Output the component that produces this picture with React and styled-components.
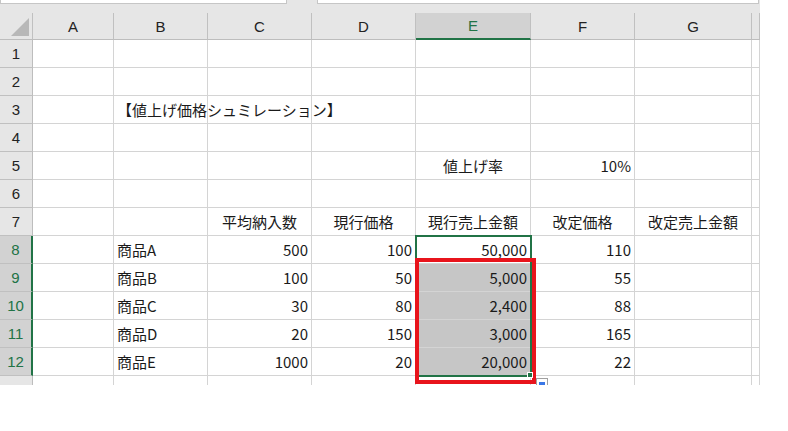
import React from 'react';
import styled, { createGlobalStyle } from 'styled-components';

const Global = createGlobalStyle`
  body { margin: 0; background: #fff; font-family: "Noto Sans CJK JP", "Noto Sans", sans-serif; }
`;

const cols = [33, 81, 94, 104, 104, 115, 104, 117, 8];
const rowH = 28;

const Page = styled.div`
  width: 788px;
  height: 431px;
  background: #fff;
  position: relative;
  overflow: hidden;
`;

const TopStrip = styled.div`
  height: 4px;
  background: #e6e6e6;
  display: flex;
  gap: 30px;
  width: 760px;
`;

const TopBox = styled.div`
  width: ${p => p.w}px;
  background: #fff;
  border: 1px solid #c6c6c6;
  border-top: none;
`;

const Spacer = styled.div`
  height: 9px;
  background: #e6e6e6;
  width: 760px;
`;

const Clip = styled.div`
  height: 372px;
  overflow: hidden;
`;

const Grid = styled.div`
  display: grid;
  grid-template-columns: ${cols.map(c => c + 'px').join(' ')};
  grid-auto-rows: ${rowH}px;
  grid-template-rows: 27px;
  width: 760px;
  position: relative;
`;

const ColHead = styled.div`
  background: ${p => (p.sel ? '#d2d2d2' : '#e6e6e6')};
  border-right: 1px solid #c0c0c0;
  border-bottom: ${p => (p.sel ? '2px solid #217346' : '1px solid #bdbdbd')};
  color: ${p => (p.sel ? '#217346' : '#222')};
  font-family: "Liberation Sans", Arial, sans-serif;
  font-size: 15px;
  display: flex;
  align-items: center;
  justify-content: center;
  position: relative;
`;

const Corner = styled(ColHead)`
  &::after {
    content: '';
    position: absolute;
    right: 3px;
    bottom: 3px;
    border-left: 18px solid transparent;
    border-bottom: 18px solid #b8b8b8;
  }
`;

const RowHead = styled.div`
  background: ${p => (p.sel ? '#d2d2d2' : '#e6e6e6')};
  border-bottom: 1px solid #c0c0c0;
  border-right: ${p => (p.sel ? '2px solid #217346' : '1px solid #bdbdbd')};
  color: ${p => (p.sel ? '#217346' : '#222')};
  font-family: "Liberation Sans", Arial, sans-serif;
  font-size: 15px;
  display: flex;
  align-items: center;
  justify-content: center;
`;

const Cell = styled.div`
  border-right: 1px solid #d4d4d4;
  border-bottom: 1px solid #d4d4d4;
  background: ${p => (p.fill ? '#c6c6c6' : '#fff')};
  font-size: 15px;
  color: #1a1a1a;
  display: flex;
  align-items: center;
  justify-content: ${p => (p.right ? 'flex-end' : p.center ? 'center' : 'flex-start')};
  padding: 0 3px;
  white-space: nowrap;
  overflow: visible;
  position: relative;
  z-index: ${p => (p.over ? 2 : 'auto')};
`;

const Overlay = styled.div`
  position: absolute;
  pointer-events: none;
  box-sizing: border-box;
  z-index: 3;
`;

const Sel = styled(Overlay)`
  border: 2px solid #217346;
`;

const Red = styled(Overlay)`
  border: 4px solid #e8141c;
`;

const Handle = styled(Overlay)`
  width: 6px;
  height: 6px;
  background: #217346;
  border: 1px solid #fff;
`;

const PasteIcon = styled(Overlay)`
  width: 12px;
  height: 10px;
  border: 1px solid #a0a0a0;
  background: #fff;
  &::after {
    content: '';
    position: absolute;
    left: 2px;
    top: 3px;
    width: 6px;
    height: 3px;
    background: #3b78e7;
  }
`;

const data = [
  [],
  [],
  [null, { t: '【値上げ価格シュミレーション】', over: true }],
  [],
  [null, null, null, null, { t: '値上げ率', c: true }, { t: '10%', r: true }],
  [],
  [null, null, { t: '平均納入数', c: true }, { t: '現行価格', c: true }, { t: '現行売上金額', c: true }, { t: '改定価格', c: true }, { t: '改定売上金額', c: true }],
  [null, '商品A', 500, 100, '50,000', 110],
  [null, '商品B', 100, 50, '5,000', 55],
  [null, '商品C', 30, 80, '2,400', 88],
  [null, '商品D', 20, 150, '3,000', 165],
  [null, '商品E', 1000, 20, '20,000', 22],
  [],
];

const letters = ['A', 'B', 'C', 'D', 'E', 'F', 'G', ''];

export default function App() {
  const top = 27;
  return (
    <Page>
      <Global />
      <TopStrip>
        <TopBox w={285} />
        <TopBox w={440} />
      </TopStrip>
      <Spacer />
      <Clip>
        <Grid>
          <Corner />
          {letters.map((l, i) => (
            <ColHead key={i} sel={l === 'E'}>{l}</ColHead>
          ))}
          {data.map((row, r) => (
            <React.Fragment key={r}>
              <RowHead sel={r >= 7 && r <= 11}>{r + 1}</RowHead>
              {letters.map((_, c) => {
                const v = row[c];
                let text = '';
                let right = false;
                let center = false;
                let over = false;
                if (v && typeof v === 'object') {
                  text = v.t;
                  right = !!v.r;
                  center = !!v.c;
                  over = !!v.over;
                } else if (v !== undefined && v !== null) {
                  text = v;
                  right = c >= 2;
                }
                return (
                  <Cell key={c} right={right} center={center} over={over} fill={c === 4 && r >= 8 && r <= 11}>
                    {text}
                  </Cell>
                );
              })}
            </React.Fragment>
          ))}
          <Sel style={{ left: 415, top: top + 7 * rowH - 1, width: 117, height: 5 * rowH + 2 }} />
          <Red style={{ left: 415, top: top + 8 * rowH - 6, width: 121, height: 126 }} />
          <Handle style={{ left: 527, top: top + 12 * rowH - 4 }} />
          <PasteIcon style={{ left: 536, top: top + 12 * rowH + 2 }} />
        </Grid>
      </Clip>
    </Page>
  );
}
